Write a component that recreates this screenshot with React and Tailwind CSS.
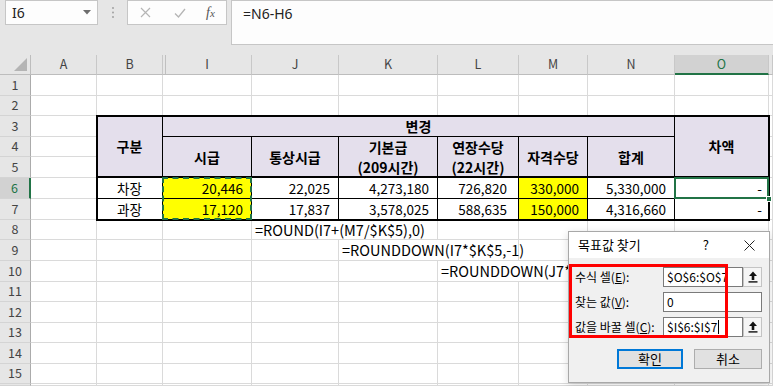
import React from 'react';

const CS = ['', 'col-start-1', 'col-start-2', 'col-start-3', 'col-start-4', 'col-start-5', 'col-start-6', 'col-start-7', 'col-start-8', 'col-start-9', 'col-start-10', 'col-start-11'];
const RS = ['', 'row-start-1', 'row-start-2', 'row-start-3', 'row-start-4', 'row-start-5', 'row-start-6', 'row-start-7', 'row-start-8', 'row-start-9', 'row-start-10', 'row-start-11', 'row-start-12', 'row-start-13', 'row-start-14', 'row-start-15', 'row-start-16', 'row-start-17'];

const LETTERS = ['A', 'B', 'I', 'J', 'K', 'L', 'M', 'N', 'O', ''];

function FormulaBar() {
  return (
    <div className="h-[55px] bg-[#e6e6e6] flex items-start font-['Noto_Sans',sans-serif]">
      <div className="ml-[5px] w-[93px] h-[25px] bg-[#fdfdfd] border border-[#c6c6c6] flex items-center pl-[6px] pr-[6px] text-[14px] text-[#222]">
        <span>I6</span>
        <svg className="ml-auto" width="8" height="5" viewBox="0 0 8 5"><path d="M0 0h8L4 4.5z" fill="#6d6d6d" /></svg>
      </div>
      <div className="w-[29px] h-[25px] flex items-center justify-center">
        <svg width="2" height="11" viewBox="0 0 2 11"><circle cx="1" cy="1" r="0.9" fill="#9a9a9a" /><circle cx="1" cy="5.5" r="0.9" fill="#9a9a9a" /><circle cx="1" cy="10" r="0.9" fill="#9a9a9a" /></svg>
      </div>
      <div className="w-[100px] h-[25px] bg-[#fdfdfd] border border-[#c6c6c6] flex items-center">
        <svg className="ml-[12px]" width="11" height="11" viewBox="0 0 11 11"><path d="M1 1l9 9M10 1l-9 9" stroke="#b5b5b5" strokeWidth="1.2" /></svg>
        <svg className="ml-[23px]" width="12" height="10" viewBox="0 0 12 10"><path d="M1 5.5l3.5 3.5L11 1" stroke="#b5b5b5" strokeWidth="1.3" fill="none" /></svg>
        <span className="ml-[20px] text-[14px] italic font-['Liberation_Serif',serif] text-[#555] leading-none">f<span className="text-[11px]">x</span></span>
      </div>
      <div className="ml-[4px] flex-1 h-[45px] bg-[#fdfdfd] border border-r-0 border-[#c6c6c6] pl-[11px] pt-[2px] text-[14px] text-[#222]">
        =N6-H6
      </div>
    </div>
  );
}

function HeaderCells() {
  const out = [];
  out.push(
    <div key="corner" className={`${RS[1]} ${CS[1]} bg-[#e6e6e6] border-r border-b border-[#bdbdbd] relative`}>
      <svg className="absolute right-[3px] bottom-[3px]" width="13" height="13" viewBox="0 0 13 13"><path d="M13 0V13H0z" fill="#b4b4b4" /></svg>
    </div>
  );
  LETTERS.forEach((l, i) => {
    const sel = l === 'O';
    out.push(
      <div
        key={'h' + i}
        className={`${RS[1]} ${CS[i + 2]} flex items-center justify-center text-[12.5px] ${sel ? 'bg-[#d2d2d2] text-[#217346] border-b-2 border-b-[#217346]' : 'bg-[#e6e6e6] text-[#444] border-b border-b-[#bdbdbd]'} border-r border-r-[#c8c8c8] ${l === 'I' ? 'shadow-[inset_2px_0_0_#e6e6e6,inset_3px_0_0_#c0c0c0]' : ''}`}
      >
        {l}
      </div>
    );
  });
  return out;
}

function RowHeaders() {
  const out = [];
  for (let r = 1; r <= 16; r++) {
    const sel = r === 6;
    out.push(
      <div
        key={'r' + r}
        className={`${RS[r + 1]} ${CS[1]} flex items-center justify-center text-[12.5px] border-b border-b-[#d4d4d4] ${sel ? 'bg-[#d2d2d2] text-[#217346] border-r-2 border-r-[#217346]' : 'bg-[#e6e6e6] text-[#444] border-r border-r-[#ababab]'}`}
      >
        {r <= 15 ? r : ''}
      </div>
    );
  }
  return out;
}

function GridCells() {
  const out = [];
  for (let r = 1; r <= 16; r++) {
    for (let c = 2; c <= 11; c++) {
      out.push(<div key={`g${r}-${c}`} className={`${RS[r + 1]} ${CS[c]} border-r border-b border-[#dadada] bg-white`} />);
    }
  }
  return out;
}

const H = 'bg-[#e4dfec] border-r border-black flex flex-col items-center justify-center font-bold text-[14px] leading-[20px] text-black';

function DataCell({ v, yellow, children, pr = 'pr-[8px]' }) {
  return (
    <div className={`relative border-r border-b border-black flex items-center justify-end ${pr} ${yellow ? 'bg-[#ffff00]' : 'bg-white'}`}>
      {v}
      {children}
    </div>
  );
}

function Table() {
  return (
    <div className="col-start-3 col-end-11 row-start-4 row-end-9 z-[5] grid grid-cols-[66px_89px_87px_99px_81px_69px_87px_94px] grid-rows-[21px_20px_21px_21px_21px] outline-2 outline-black -outline-offset-1 text-[13.5px] text-black">
      <div className={`${H} row-span-3 border-b-2`}>구분</div>
      <div className={`${H} col-span-6 border-b`}>변경</div>
      <div className={`${H} row-span-3 border-b-2`}>차액</div>
      <div className={`${H} row-span-2 border-b-2`}>시급</div>
      <div className={`${H} row-span-2 border-b-2`}>통상시급</div>
      <div className={`${H} row-span-2 border-b-2 pt-[1px]`}><span>기본급</span><span>(209시간)</span></div>
      <div className={`${H} row-span-2 border-b-2 pt-[1px]`}><span>연장수당</span><span>(22시간)</span></div>
      <div className={`${H} row-span-2 border-b-2`}>자격수당</div>
      <div className={`${H} row-span-2 border-b-2`}>합계</div>

      <div className="border-r border-b border-black bg-white flex items-center justify-center">차장</div>
      <DataCell v="20,446" yellow>
        <div className="absolute -left-px -top-px w-[90px] h-[43px] border-2 border-dashed border-[#217346] z-10 pointer-events-none" />
      </DataCell>
      <DataCell v="22,025" />
      <DataCell v="4,273,180" />
      <DataCell v="726,820" pr="pr-[11px]" />
      <DataCell v="330,000" yellow />
      <DataCell v="5,330,000" />
      <DataCell v="-" pr="pr-[6px]">
        <div className="absolute -left-px -top-px -right-px -bottom-px border-2 border-[#217346] z-10 pointer-events-none" />
        <div className="absolute -right-[4px] -bottom-[4px] w-[6px] h-[6px] bg-[#217346] border border-white z-20" />
      </DataCell>

      <div className="border-r border-b border-black bg-white flex items-center justify-center">과장</div>
      <DataCell v="17,120" yellow />
      <DataCell v="17,837" />
      <DataCell v="3,578,025" />
      <DataCell v="588,635" pr="pr-[11px]" />
      <DataCell v="150,000" yellow />
      <DataCell v="4,316,660" />
      <DataCell v="-" pr="pr-[6px]" />
    </div>
  );
}

function Spill() {
  const t = 'bg-white border-r border-b border-[#dadada] flex items-center pl-[3px] whitespace-nowrap text-[14.5px] text-black overflow-visible';
  return (
    <>
      <div className={`row-start-9 col-start-5 col-end-7 ${t}`}>=ROUND(I7+(M7/$K$5),0)</div>
      <div className={`row-start-10 col-start-6 col-end-8 ${t}`}>=ROUNDDOWN(I7*$K$5,-1)</div>
      <div className={`row-start-11 col-start-7 col-end-11 ${t}`}>=ROUNDDOWN(J7*$L$5,-1)</div>
    </>
  );
}

function RefBtn() {
  return (
    <div className="w-[19px] h-[20px] bg-[#f5f5f5] border border-[#c4c4c4] flex items-center justify-center">
      <svg width="10" height="12" viewBox="0 0 10 12">
        <path d="M5 0.5L9 5H6.3V9H3.7V5H1z" fill="#111" />
        <rect x="0.5" y="10.2" width="9" height="1.4" fill="#111" />
      </svg>
    </div>
  );
}

function Dialog() {
  const inputCls = 'h-[20px] bg-white border border-[#7a7a7a] flex items-center pl-[3px] text-[12px] text-black whitespace-nowrap overflow-hidden';
  const label = 'w-[88px] text-[12px] text-black whitespace-nowrap';
  return (
    <div className="absolute left-[568px] top-[231px] w-[202px] h-[152px] bg-[#f0f0f0] border border-[#a8a8a8] z-30 shadow-[0_2px_8px_rgba(0,0,0,0.15)]">
      <div className="h-[26px] bg-white flex items-center pl-[9px] pr-[14px] text-[13px] text-black">
        <span>목표값 찾기</span>
        <span className="ml-auto mr-[35px] text-[13px]">?</span>
        <svg width="11" height="11" viewBox="0 0 11 11"><path d="M0.5 0.5l10 10M10.5 0.5l-10 10" stroke="#222" strokeWidth="1" /></svg>
      </div>
      <div className="pl-[6px] pr-[7px] pt-[9px] flex flex-col gap-[5px]">
        <div className="flex items-center">
          <span className={label}>수식 셀(<u>E</u>):</span>
          <div className={`${inputCls} w-[80px]`}>$O$6:$O$7</div>
          <RefBtn />
        </div>
        <div className="flex items-center">
          <span className={label}>찾는 값(<u>V</u>):</span>
          <div className={`${inputCls} w-[99px]`}>0</div>
        </div>
        <div className="flex items-center">
          <span className={label}>값을 바꿀 셀(<u>C</u>):</span>
          <div className={`${inputCls} w-[80px]`}>$I$6:$I$7<span className="ml-[1px] w-px h-[14px] bg-black" /></div>
          <RefBtn />
        </div>
      </div>
      <div className="mt-[12px] pr-[7px] flex justify-end gap-[11px]">
        <div className="w-[66px] h-[20px] bg-[#e1e1e1] border-2 border-[#0078d7] flex items-center justify-center text-[13px] text-black">확인</div>
        <div className="w-[68px] h-[20px] bg-[#e1e1e1] border border-[#adadad] flex items-center justify-center text-[13px] text-black">취소</div>
      </div>
      <div className="absolute left-0 top-[32px] w-[159px] h-[74px] border-[3px] border-[#ff0000] pointer-events-none" />
    </div>
  );
}

export default function App() {
  return (
    <div className="relative w-[773px] h-[386px] overflow-hidden bg-white font-['Noto_Sans_CJK_KR','Noto_Sans',sans-serif]">
      <FormulaBar />
      <div className="grid grid-cols-[31px_66px_66px_89px_87px_99px_81px_69px_87px_94px_4px] grid-rows-[20px_21px_20px_21px_20px_21px_21px_21px_20px_21px_21px_20px_21px_20px_21px_20px_2px] font-['Noto_Sans_CJK_KR',sans-serif]">
        <HeaderCells />
        <RowHeaders />
        <GridCells />
        <Table />
        <Spill />
      </div>
      <Dialog />
    </div>
  );
}
